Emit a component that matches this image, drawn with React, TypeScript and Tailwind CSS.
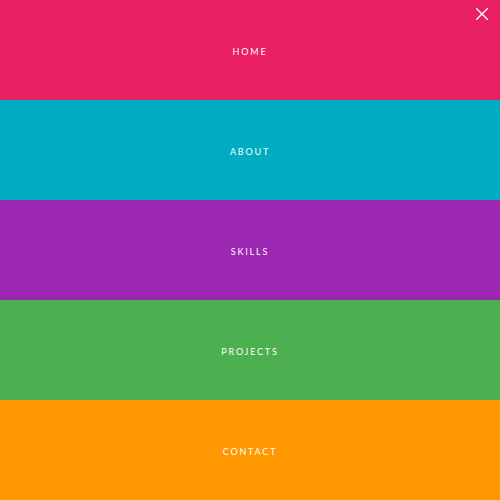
import React from "react";

const items = [
  { label: "HOME", bg: "bg-[#e91e63]" },
  { label: "ABOUT", bg: "bg-[#00acc1]" },
  { label: "SKILLS", bg: "bg-[#9c27b0]" },
  { label: "PROJECTS", bg: "bg-[#4caf50]" },
  { label: "CONTACT", bg: "bg-[#ff9800]" },
];

export default function App() {
  return (
    <div className="relative w-[500px] h-[500px] flex flex-col" style={{ fontFamily: "Lato, 'Open Sans', sans-serif" }}>
      {items.map((it) => (
        <a
          key={it.label}
          className={`${it.bg} h-[100px] flex items-center justify-center text-white text-[9px] tracking-[1.8px] pt-[4px]`}
        >
          {it.label}
        </a>
      ))}
      <button className="absolute top-[8px] right-[12px] w-[12px] h-[12px]">
        <svg width="12" height="12" viewBox="0 0 12 12" stroke="white" strokeWidth="1.3">
          <line x1="0" y1="0" x2="12" y2="12" />
          <line x1="12" y1="0" x2="0" y2="12" />
        </svg>
      </button>
    </div>
  );
}
